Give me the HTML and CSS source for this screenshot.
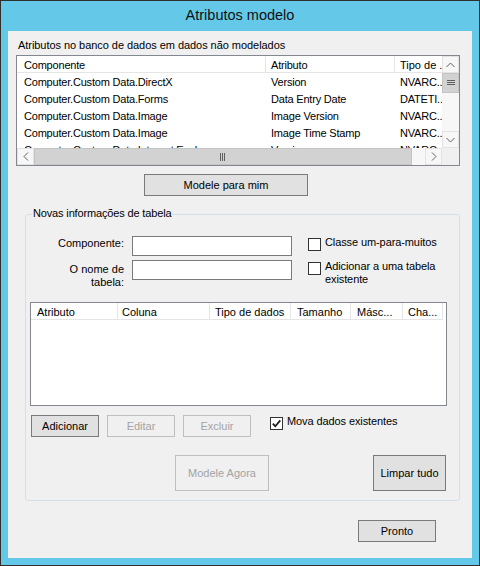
FILE: index.html
```html
<!DOCTYPE html>
<html lang="pt">
<head>
<meta charset="utf-8">
<title>Atributos modelo</title>
<link rel="stylesheet" href="styles.css">
</head>
<body>
<div class="window">
  <div class="titlebar">Atributos modelo</div>
  <div class="client">
    <div class="caption">Atributos no banco de dados em dados não modelados</div>

    <div class="lv lv-main">
      <div class="lv-top">
        <div class="lv-view">
          <div class="lv-head">
            <div class="hc c1">Componente</div>
            <div class="hc c2">Atributo</div>
            <div class="hc c3">Tipo de ...</div>
          </div>
          <div class="lv-row"><div class="c1">Computer.Custom Data.DirectX</div><div class="c2">Version</div><div class="c3">NVARC...</div></div>
          <div class="lv-row"><div class="c1">Computer.Custom Data.Forms</div><div class="c2">Data Entry Date</div><div class="c3">DATETI...</div></div>
          <div class="lv-row"><div class="c1">Computer.Custom Data.Image</div><div class="c2">Image Version</div><div class="c3">NVARC...</div></div>
          <div class="lv-row"><div class="c1">Computer.Custom Data.Image</div><div class="c2">Image Time Stamp</div><div class="c3">NVARC...</div></div>
          <div class="lv-row"><div class="c1">Computer.Custom Data.Internet Explorer</div><div class="c2">Version</div><div class="c3">NVARC...</div></div>
        </div>
        <div class="vscroll">
          <div class="sb-btn"><svg width="9" height="6" viewBox="0 0 9 6"><polyline points="0.5,5 4.5,1 8.5,5" fill="none" stroke="#606060" stroke-width="1"/></svg></div>
          <div class="sb-thumb vthumb"><svg width="8" height="6" viewBox="0 0 8 6"><path d="M0 0.5H8M0 2.5H8M0 4.5H8" stroke="#606060" stroke-width="1"/></svg></div>
          <div class="sb-track"></div>
          <div class="sb-btn"><svg width="9" height="6" viewBox="0 0 9 6"><polyline points="0.5,1 4.5,5 8.5,1" fill="none" stroke="#606060" stroke-width="1"/></svg></div>
        </div>
      </div>
      <div class="hscroll">
        <div class="sb-btn"><svg width="6" height="9" viewBox="0 0 6 9"><polyline points="5,0.5 1,4.5 5,8.5" fill="none" stroke="#606060" stroke-width="1"/></svg></div>
        <div class="sb-thumb hthumb"><svg width="6" height="8" viewBox="0 0 6 8"><path d="M0.5 0V8M2.5 0V8M4.5 0V8" stroke="#606060" stroke-width="1"/></svg></div>
        <div class="sb-track"></div>
        <div class="sb-btn"><svg width="6" height="9" viewBox="0 0 6 9"><polyline points="1,0.5 5,4.5 1,8.5" fill="none" stroke="#606060" stroke-width="1"/></svg></div>
        <div class="sb-corner"></div>
      </div>
    </div>

    <div class="btn-line">
      <button class="btn btn-model">Modele para mim</button>
    </div>

    <div class="group">
      <span class="legend">Novas informações de tabela</span>
      <div class="form-grid">
        <div class="flabel">Componente:</div>
        <div class="textbox"></div>
        <div class="check"><span class="box"></span><span class="check-text">Classe um-para-muitos</span></div>
        <div class="flabel flabel-2">O nome de<br>tabela:</div>
        <div class="textbox"></div>
        <div class="check"><span class="box"></span><span class="check-text">Adicionar a uma tabela<br>existente</span></div>
      </div>

      <div class="lv lv-cols">
        <div class="lv-head">
          <div class="hc k1">Atributo</div>
          <div class="hc k2">Coluna</div>
          <div class="hc k3">Tipo de dados</div>
          <div class="hc k4">Tamanho</div>
          <div class="hc k5">Másc...</div>
          <div class="hc k6">Cha...</div>
        </div>
      </div>

      <div class="edit-row">
        <button class="btn btn-small">Adicionar</button>
        <button class="btn btn-small" disabled>Editar</button>
        <button class="btn btn-small" disabled>Excluir</button>
        <div class="check check-move"><span class="box"><svg width="11" height="11" viewBox="0 0 11 11"><polyline points="1.8,5.6 4.3,8.2 9.3,2.4" fill="none" stroke="#1a1a1a" stroke-width="1.7"/></svg></span><span class="check-text">Mova dados existentes</span></div>
      </div>

      <div class="action-row">
        <button class="btn btn-tall btn-now" disabled>Modele Agora</button>
        <button class="btn btn-tall btn-clear">Limpar tudo</button>
      </div>
    </div>

    <div class="footer">
      <button class="btn btn-done">Pronto</button>
    </div>
  </div>
</div>
</body>
</html>
```

FILE: styles.css
```css
* { box-sizing: border-box; }

html, body {
  margin: 0;
  padding: 0;
  background: #64c9e9;
}

body {
  font-family: "Liberation Sans", Arial, sans-serif;
  font-size: 11px;
  color: #000;
}

.window {
  width: 480px;
  height: 566px;
  background: #64c9e9;
  border: 1px solid #2f2f2f;
  padding: 0 7px 7px;
  display: flex;
  flex-direction: column;
}

.titlebar {
  height: 30px;
  line-height: 29px;
  text-align: center;
  font-size: 14.5px;
  color: #111;
}

.client {
  flex: 1;
  background: #f0f0f0;
  display: flex;
  flex-direction: column;
  align-items: flex-start;
}

.caption {
  margin: 8px 0 0 10px;
  line-height: 13px;
  height: 13px;
  letter-spacing: -0.05px;
}

/* list views */
.lv {
  background: #fff;
  border: 1px solid #828790;
}

.lv-main {
  margin: 3px 0 0 8px;
  width: 444px;
  height: 111px;
  display: flex;
  flex-direction: column;
}

.lv-top {
  display: flex;
  height: 92px;
}

.lv-view {
  width: 425px;
  overflow: hidden;
}

.lv-head {
  display: flex;
  height: 17px;
}

.hc {
  height: 17px;
  padding-top: 2px;
  line-height: 14px;
  border-right: 1px solid #e5e5e5;
  border-bottom: 1px solid #e5e5e5;
  white-space: nowrap;
  overflow: hidden;
  flex: none;
}

.lv-row {
  display: flex;
  height: 17px;
  padding-top: 2px;
  line-height: 15px;
  white-space: nowrap;
}

.lv-row > div { flex: none; overflow: hidden; letter-spacing: -0.2px; }

.c1 { width: 249px; padding-left: 7px; }
.c2 { width: 129px; padding-left: 5px; }
.c3 { width: 120px; padding-left: 5px; border-right: none; }
.lv-head .c1, .lv-head .c2 { letter-spacing: -0.2px; }

/* scrollbars */
.vscroll {
  width: 17px;
  display: flex;
  flex-direction: column;
  background: #f7f7f7;
}

.hscroll {
  height: 17px;
  display: flex;
  background: #f7f7f7;
}

.sb-btn {
  width: 17px;
  height: 17px;
  flex: none;
  display: flex;
  align-items: center;
  justify-content: center;
  background: #f7f7f7;
  border: 1px solid #e3e3e3;
}

.sb-thumb {
  background: #d2d2d2;
  display: flex;
  align-items: center;
  justify-content: center;
  flex: none;
}

.vthumb { height: 20px; width: 17px; border: 1px solid #c4c4c4; }
.hthumb { width: 378px; height: 17px; border: 1px solid #c4c4c4; }

.sb-track { flex: 1; }

.sb-corner {
  width: 17px;
  height: 17px;
  background: #f0f0f0;
  flex: none;
}

/* buttons */
.btn {
  font-family: "Liberation Sans", Arial, sans-serif;
  font-size: 11px;
  color: #000;
  background: #e1e1e1;
  border: 1px solid #7a7a7a;
  border-radius: 0;
  padding: 0;
  margin: 0;
  height: 22px;
  line-height: 20px;
  text-align: center;
}

.btn:disabled {
  background: #f0f0f0;
  border-color: #bfbfbf;
  color: #a3a3a3;
}

.btn-line {
  margin: 8px 0 0 136px;
}

.btn-model { width: 164px; }

/* group box */
.group {
  position: relative;
  margin: 18px 0 0 17px;
  width: 435px;
  height: 287px;
  border: 1px solid #d5dfe5;
  border-radius: 3px;
  padding-top: 21px;
}

.legend {
  position: absolute;
  top: -8px;
  left: 6px;
  padding: 0 1px;
  line-height: 13px;
  background: #f0f0f0;
  letter-spacing: -0.15px;
}

.form-grid {
  display: grid;
  grid-template-columns: 98px 160px auto;
  grid-template-rows: 20px 20px;
  column-gap: 8px;
  row-gap: 4px;
}

.flabel {
  text-align: right;
  line-height: 13px;
  padding-top: 1px;
  white-space: nowrap;
}

.flabel-2 { padding-top: 3px; }

.textbox {
  background: #fff;
  border: 1px solid #7a7a7a;
  height: 20px;
}

.check {
  display: flex;
  align-items: flex-start;
  margin-left: 8px;
  line-height: 13px;
  white-space: nowrap;
}

.box {
  width: 13px;
  height: 13px;
  margin-top: 2px;
  border: 1px solid #333;
  background: #fff;
  flex: none;
  display: flex;
  align-items: center;
  justify-content: center;
}

.check-text { margin-left: 4px; letter-spacing: -0.1px; }

.lv-cols {
  margin: 22px 0 0 4px;
  width: 417px;
  height: 104px;
}

.k1 { width: 87px; padding-left: 6px; }
.k2 { width: 92px; padding-left: 4px; }
.k3 { width: 81px; padding-left: 5px; }
.k4 { width: 60px; padding-left: 6px; }
.k5 { width: 52px; padding-left: 6px; }
.k6 { width: 40px; padding-left: 5px; }

.edit-row {
  display: flex;
  align-items: flex-start;
  gap: 8px;
  margin: 9px 0 0 5px;
}

.btn-small { width: 68px; }

.check-move { margin-left: 11px; }
.check-move .check-text { margin-left: 4px; }

.action-row {
  display: flex;
  margin: 18px 0 0 149px;
  gap: 104px;
}

.btn-tall { height: 36px; line-height: 34px; }
.btn-now { width: 94px; }
.btn-clear { width: 73px; }

.footer {
  margin: 19px 0 0 350px;
}

.btn-done { width: 78px; }
```
